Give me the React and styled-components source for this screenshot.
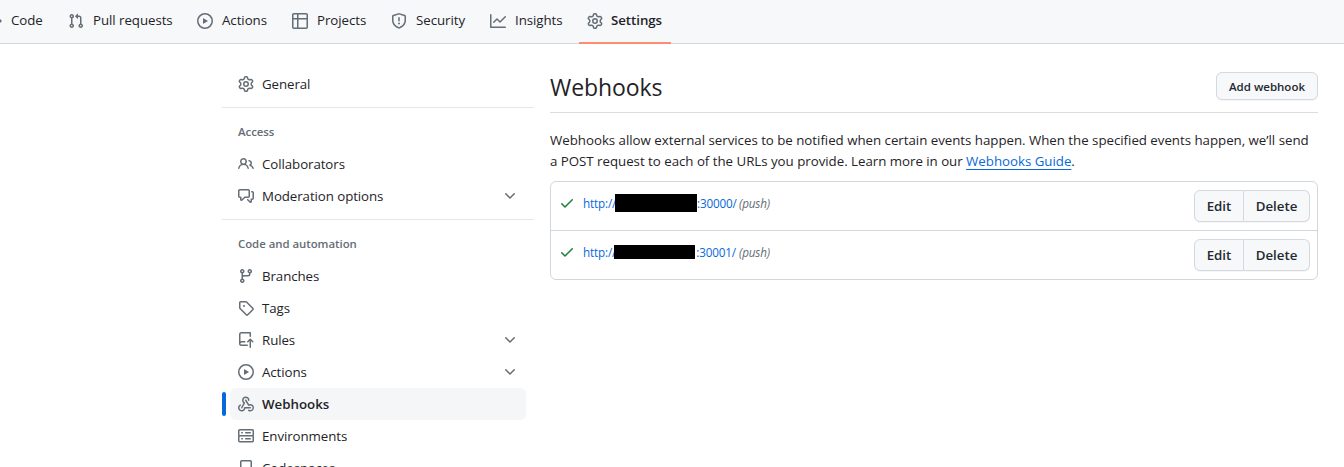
import React from 'react';
import styled, { createGlobalStyle, css } from 'styled-components';

const GlobalStyle = createGlobalStyle`
  * { box-sizing: border-box; }
  body {
    margin: 0;
    background: #fff;
    color: #1f2328;
    font-family: "Open Sans", "Noto Sans", sans-serif;
    font-size: 13.3px;
    line-height: 21px;
  }
`;

const Page = styled.div`
  width: 1344px;
  height: 467px;
  overflow: hidden;
`;

const TabBar = styled.nav`
  display: flex;
  gap: 8px;
  height: 44px;
  background: #f6f8fa;
  border-bottom: 1px solid #d0d7de;
`;

const Tab = styled.a`
  display: flex;
  align-items: center;
  flex: none;
  gap: 9px;
  width: ${(p) => p.$width}px;
  height: 44px;
  padding: 0 8px 3px;
  white-space: nowrap;
  letter-spacing: -0.06px;
  svg { color: #656d76; }
  &:first-child { margin-left: -22px; }
  ${(p) => p.$active && css`
    gap: 8px;
    font-weight: 600;
    padding-bottom: 1px;
    border-bottom: 2px solid #fd8c73;
  `}
`;

const Columns = styled.div`
  display: grid;
  grid-template-columns: 312px 768px;
  column-gap: 16px;
  padding: 24px 0 0 222px;
`;

const Sidebar = styled.aside`
  display: flex;
  flex-direction: column;
`;

const Section = styled.section`
  & + & {
    margin-top: 7px;
    border-top: 1px solid #e4e7eb;
  }
`;

const SectionTitle = styled.h3`
  margin: 0;
  height: 40px;
  padding: 6px 16px 0;
  font-size: 11.4px;
  font-weight: 600;
  line-height: 36px;
  letter-spacing: -0.03px;
  color: #656d76;
`;

const NavRow = styled.a`
  position: relative;
  display: flex;
  align-items: center;
  gap: 8px;
  height: 32px;
  margin: 0 8px;
  padding: 0 8px;
  border-radius: 6px;
  letter-spacing: -0.08px;
  svg { color: #656d76; }
  ${(p) => p.$active && css`
    background: #f4f6f8;
    font-weight: 600;
    letter-spacing: 0;
    &::before {
      content: "";
      position: absolute;
      left: -8px;
      top: 4px;
      width: 4px;
      height: 24px;
      border-radius: 6px;
      background: #0969da;
    }
  `}
`;

const NavLabel = styled.span`
  flex: 1;
  white-space: nowrap;
`;

const Heading = styled.header`
  display: flex;
  justify-content: space-between;
  height: 45px;
  border-bottom: 1px solid #d8dee4;
`;

const Title = styled.h2`
  margin: 0;
  font-size: 23px;
  font-weight: 400;
  line-height: 39px;
  letter-spacing: -0.1px;
`;

const AddButton = styled.button`
  width: 102px;
  height: 28px;
  margin-top: 4px;
  padding: 1px 0 0;
  border: 1px solid #d5d9dd;
  border-radius: 6px;
  background: #f6f8fa;
  color: #24292f;
  font: 600 11.5px/20px "Open Sans", sans-serif;
  box-shadow: 0 1px 0 rgba(31, 35, 40, 0.04);
`;

const Description = styled.p`
  margin: 17px 0 9px;
  white-space: nowrap;
  letter-spacing: -0.025px;
`;

const GuideLink = styled.a`
  color: #0969da;
  text-decoration: underline;
  text-underline-offset: 3px;
`;

const HookList = styled.ul`
  margin: 0;
  padding: 0;
  list-style: none;
  border: 1px solid #d0d7de;
  border-radius: 6px;
`;

const HookRow = styled.li`
  display: flex;
  align-items: flex-start;
  height: 48px;
  padding: 8px 7px 0 8px;
  & + & { height: 49px; border-top: 1px solid #d0d7de; }
  > svg { margin-top: 5px; color: #1a7f37; }
`;

const HookUrl = styled.div`
  display: flex;
  align-items: center;
  flex: 1;
  height: 26px;
  margin-left: 8px;
  font-size: 11.7px;
  letter-spacing: -0.15px;
  color: #0969da;
  white-space: nowrap;
`;

const Scheme = styled.span`
  width: ${(p) => p.$width}px;
`;

const Redaction = styled.span`
  position: relative;
  width: ${(p) => p.$width}px;
  height: ${(p) => p.$height}px;
  margin-bottom: ${(p) => p.$lift}px;
  background: #000;
`;

const Port = styled.span`
  width: ${(p) => p.$width}px;
  direction: rtl;
  unicode-bidi: plaintext;
  text-align: right;
  padding-right: 3px;
`;

const Event = styled.em`
  color: #656d76;
`;

const ButtonGroup = styled.div`
  display: flex;
`;

const GroupButton = styled.button`
  width: ${(p) => p.$width}px;
  height: 32px;
  padding: 0;
  border: 1px solid #d5d9dd;
  background: #f6f8fa;
  color: #24292f;
  font: 600 13.3px/20px "Open Sans", sans-serif;
  box-shadow: 0 1px 0 rgba(31, 35, 40, 0.04);
  &:first-child { border-radius: 6px 0 0 6px; }
  &:last-child { border-left: 0; border-radius: 0 6px 6px 0; }
`;

const Glyph = styled.svg`
  flex: none;
  width: 16px;
  height: 16px;
  fill: currentColor;
`;

const iconPaths = {
  code: 'm11.28 3.22 4.25 4.25a.75.75 0 0 1 0 1.06l-4.25 4.25a.749.749 0 0 1-1.275-.326.749.749 0 0 1 .215-.734L13.94 8l-3.72-3.72a.749.749 0 0 1 .326-1.275.749.749 0 0 1 .734.215Zm-6.56 0a.751.751 0 0 1 1.042.018.751.751 0 0 1 .018 1.042L2.06 8l3.72 3.72a.749.749 0 0 1-.326 1.275.749.749 0 0 1-.734-.215L.47 8.53a.75.75 0 0 1 0-1.06Z',
  pull: 'M1.5 3.25a2.25 2.25 0 1 1 3 2.122v5.256a2.251 2.251 0 1 1-1.5 0V5.372A2.25 2.25 0 0 1 1.5 3.25Zm5.677-.177L9.573.677A.25.25 0 0 1 10 .854V2.5h1A2.5 2.5 0 0 1 13.5 5v5.628a2.251 2.251 0 1 1-1.5 0V5a1 1 0 0 0-1-1h-1v1.646a.25.25 0 0 1-.427.177L7.177 3.427a.25.25 0 0 1 0-.354ZM3.75 2.5a.75.75 0 1 0 0 1.5.75.75 0 0 0 0-1.5Zm0 9.5a.75.75 0 1 0 0 1.5.75.75 0 0 0 0-1.5Zm8.25.75a.75.75 0 1 0 1.5 0 .75.75 0 0 0-1.5 0Z',
  play: 'M8 0a8 8 0 1 1 0 16A8 8 0 0 1 8 0ZM1.5 8a6.5 6.5 0 1 0 13 0 6.5 6.5 0 0 0-13 0Zm4.879-2.773 4.264 2.559a.25.25 0 0 1 0 .428l-4.264 2.559A.25.25 0 0 1 6 10.559V5.442a.25.25 0 0 1 .379-.215Z',
  table: 'M0 1.75C0 .784.784 0 1.75 0h12.5C15.216 0 16 .784 16 1.75v12.5A1.75 1.75 0 0 1 14.25 16H1.75A1.75 1.75 0 0 1 0 14.25ZM6.5 6.5v8h7.75a.25.25 0 0 0 .25-.25V6.5Zm8-1.5V1.75a.25.25 0 0 0-.25-.25H6.5V5Zm-13 1.5v7.75c0 .138.112.25.25.25H5v-8ZM5 5V1.5H1.75a.25.25 0 0 0-.25.25V5Z',
  shield: 'M7.467.133a1.748 1.748 0 0 1 1.066 0l5.25 1.68A1.75 1.75 0 0 1 15 3.48V7c0 1.566-.32 3.182-1.303 4.682-.983 1.498-2.585 2.813-5.032 3.855a1.697 1.697 0 0 1-1.33 0c-2.447-1.042-4.049-2.357-5.032-3.855C1.32 10.182 1 8.566 1 7V3.48a1.75 1.75 0 0 1 1.217-1.667Zm.61 1.429a.25.25 0 0 0-.153 0l-5.25 1.68a.25.25 0 0 0-.174.238V7c0 1.358.275 2.666 1.057 3.86.784 1.194 2.121 2.34 4.366 3.297a.196.196 0 0 0 .154 0c2.245-.956 3.582-2.104 4.366-3.298C13.225 9.666 13.5 8.36 13.5 7V3.48a.251.251 0 0 0-.174-.237l-5.25-1.68ZM8.75 4.75v3a.75.75 0 0 1-1.5 0v-3a.75.75 0 0 1 1.5 0ZM9 10.5a1 1 0 1 1-2 0 1 1 0 0 1 2 0Z',
  graph: 'M1.5 1.75V13.5h13.75a.75.75 0 0 1 0 1.5H.75a.75.75 0 0 1-.75-.75V1.75a.75.75 0 0 1 1.5 0Zm14.28 2.53-5.25 5.25a.75.75 0 0 1-1.06 0L7 7.06 4.28 9.78a.751.751 0 0 1-1.042-.018.751.751 0 0 1-.018-1.042l3.25-3.25a.75.75 0 0 1 1.06 0L10 7.94l4.72-4.72a.751.751 0 0 1 1.042.018.751.751 0 0 1 .018 1.042Z',
  gear: 'M8 0a8.2 8.2 0 0 1 .701.031C9.444.095 9.99.645 10.16 1.29l.288 1.107c.018.066.079.158.212.224.231.114.454.243.668.386.123.082.233.09.299.071l1.103-.303c.644-.176 1.392.021 1.82.63.27.385.506.792.704 1.218.315.675.111 1.422-.364 1.891l-.814.806c-.049.048-.098.147-.088.294.016.257.016.515 0 .772-.01.147.038.246.088.294l.814.806c.475.469.679 1.216.364 1.891a7.977 7.977 0 0 1-.704 1.217c-.428.61-1.176.807-1.82.63l-1.102-.302c-.067-.019-.177-.011-.3.071a5.909 5.909 0 0 1-.668.386c-.133.066-.194.158-.211.224l-.29 1.106c-.168.646-.715 1.196-1.458 1.26a8.006 8.006 0 0 1-1.402 0c-.743-.064-1.289-.614-1.458-1.26l-.289-1.106c-.018-.066-.079-.158-.212-.224a5.738 5.738 0 0 1-.668-.386c-.123-.082-.233-.09-.299-.071l-1.103.303c-.644.176-1.392-.021-1.82-.63a8.12 8.12 0 0 1-.704-1.218c-.315-.675-.111-1.422.363-1.891l.815-.806c.05-.048.098-.147.088-.294a6.214 6.214 0 0 1 0-.772c.01-.147-.038-.246-.088-.294l-.815-.806C.635 6.045.431 5.298.746 4.623a7.92 7.92 0 0 1 .704-1.217c.428-.61 1.176-.807 1.82-.63l1.102.302c.067.019.177.011.3-.071.214-.143.437-.272.668-.386.133-.066.194-.158.211-.224l.29-1.106C6.009.645 6.556.095 7.299.03 7.53.01 7.764 0 8 0Zm-.571 1.525c-.036.003-.108.036-.137.146l-.289 1.105c-.147.561-.549.967-.998 1.189-.173.086-.34.183-.5.29-.417.278-.97.423-1.529.27l-1.103-.303c-.109-.03-.175.016-.195.045-.22.312-.412.644-.573.99-.014.031-.021.11.059.19l.815.806c.411.406.562.957.53 1.456a4.709 4.709 0 0 0 0 .582c.032.499-.119 1.05-.53 1.456l-.815.806c-.081.08-.073.159-.059.19.162.346.353.677.573.989.02.03.085.076.195.046l1.102-.303c.56-.153 1.113-.008 1.53.27.161.107.328.204.501.29.447.222.85.629.997 1.189l.289 1.105c.029.109.101.143.137.146a6.6 6.6 0 0 0 1.142 0c.036-.003.108-.036.137-.146l.289-1.105c.147-.561.549-.967.998-1.189.173-.086.34-.183.5-.29.417-.278.97-.423 1.529-.27l1.103.303c.109.029.175-.016.195-.045.22-.313.411-.644.573-.99.014-.031.021-.11-.059-.19l-.815-.806c-.411-.406-.562-.957-.53-1.456a4.709 4.709 0 0 0 0-.582c-.032-.499.119-1.05.53-1.456l.815-.806c.081-.08.073-.159.059-.19a6.464 6.464 0 0 0-.573-.989c-.02-.03-.085-.076-.195-.046l-1.102.303c-.56.153-1.113.008-1.53-.27a4.44 4.44 0 0 0-.501-.29c-.447-.222-.85-.629-.997-1.189l-.289-1.105c-.029-.11-.101-.143-.137-.146a6.6 6.6 0 0 0-1.142 0ZM11 8a3 3 0 1 1-6 0 3 3 0 0 1 6 0ZM9.5 8a1.5 1.5 0 1 0-3.001.001A1.5 1.5 0 0 0 9.5 8Z',
  people: 'M2 5.5a3.5 3.5 0 1 1 5.898 2.549 5.508 5.508 0 0 1 3.034 4.084.75.75 0 1 1-1.482.235 4 4 0 0 0-7.9 0 .75.75 0 0 1-1.482-.236A5.507 5.507 0 0 1 3.102 8.05 3.493 3.493 0 0 1 2 5.5ZM11 4a3.001 3.001 0 0 1 2.22 5.018 5.01 5.01 0 0 1 2.56 3.012.749.749 0 0 1-.885.954.752.752 0 0 1-.549-.514 3.507 3.507 0 0 0-2.522-2.372.75.75 0 0 1-.574-.73v-.352a.75.75 0 0 1 .416-.672A1.5 1.5 0 0 0 11 5.5.75.75 0 0 1 11 4Zm-5.5-.5a2 2 0 1 0-.001 3.999A2 2 0 0 0 5.5 3.5Z',
  discussion: 'M1.75 1h8.5c.966 0 1.75.784 1.75 1.75v5.5A1.75 1.75 0 0 1 10.25 10H7.061l-2.574 2.573A1.458 1.458 0 0 1 2 11.543V10h-.25A1.75 1.75 0 0 1 0 8.25v-5.5C0 1.784.784 1 1.75 1ZM1.5 2.75v5.5c0 .138.112.25.25.25h1a.75.75 0 0 1 .75.75v2.19l2.72-2.72a.749.749 0 0 1 .53-.22h3.5a.25.25 0 0 0 .25-.25v-5.5a.25.25 0 0 0-.25-.25h-8.5a.25.25 0 0 0-.25.25Zm13 2a.25.25 0 0 0-.25-.25h-.5a.75.75 0 0 1 0-1.5h.5c.966 0 1.75.784 1.75 1.75v5.5A1.75 1.75 0 0 1 14.25 12H14v1.543a1.458 1.458 0 0 1-2.487 1.03L9.22 12.28a.749.749 0 0 1 .326-1.275.749.749 0 0 1 .734.215l2.22 2.22v-2.19a.75.75 0 0 1 .75-.75h1a.25.25 0 0 0 .25-.25Z',
  branch: 'M9.5 3.25a2.25 2.25 0 1 1 3 2.122V6A2.5 2.5 0 0 1 10 8.5H6a1 1 0 0 0-1 1v1.128a2.251 2.251 0 1 1-1.5 0V5.372a2.25 2.25 0 1 1 1.5 0v1.836A2.493 2.493 0 0 1 6 7h4a1 1 0 0 0 1-1v-.628A2.25 2.25 0 0 1 9.5 3.25Zm-6 0a.75.75 0 1 0 1.5 0 .75.75 0 0 0-1.5 0Zm8.25-.75a.75.75 0 1 0 0 1.5.75.75 0 0 0 0-1.5ZM4.25 12a.75.75 0 1 0 0 1.5.75.75 0 0 0 0-1.5Z',
  tag: 'M1 7.775V2.75C1 1.784 1.784 1 2.75 1h5.025c.464 0 .91.184 1.238.513l6.25 6.25a1.75 1.75 0 0 1 0 2.474l-5.026 5.026a1.75 1.75 0 0 1-2.474 0l-6.25-6.25A1.752 1.752 0 0 1 1 7.775Zm1.5 0c0 .066.026.13.073.177l6.25 6.25a.25.25 0 0 0 .354 0l5.025-5.025a.25.25 0 0 0 0-.354l-6.25-6.25a.25.25 0 0 0-.177-.073H2.75a.25.25 0 0 0-.25.25ZM6 5a1 1 0 1 1 0 2 1 1 0 0 1 0-2Z',
  rules: 'M1 2.5A2.5 2.5 0 0 1 3.5 0h8.75a.75.75 0 0 1 .75.75v3.5a.75.75 0 0 1-1.5 0V1.5h-8a1 1 0 0 0-1 1v6.708A2.493 2.493 0 0 1 3.5 9h3.25a.75.75 0 0 1 0 1.5H3.5a1 1 0 0 0 0 2h5.75a.75.75 0 0 1 0 1.5H3.5A2.5 2.5 0 0 1 1 11.5Zm13.23 7.79-1.224-1.224v6.184a.75.75 0 0 1-1.5 0V9.066L10.28 10.29a.75.75 0 0 1-1.06-1.061l2.505-2.504a.75.75 0 0 1 1.06 0L15.29 9.23a.751.751 0 0 1-.018 1.042.751.751 0 0 1-1.042.018Z',
  webhook: 'M5.5 4.25a2.25 2.25 0 0 1 4.5 0 .75.75 0 0 0 1.5 0 3.75 3.75 0 1 0-6.14 2.889l-2.272 4.258a.75.75 0 0 0 1.324.706L7 7.25a.75.75 0 0 0-.309-1.015A2.25 2.25 0 0 1 5.5 4.25ZM7.364 3.607a.75.75 0 0 1 1.03.257l2.608 4.349a3.75 3.75 0 1 1-.628 6.785.75.75 0 0 1 .752-1.299 2.25 2.25 0 1 0-.033-3.88.75.75 0 0 1-1.03-.256L7.107 4.636a.75.75 0 0 1 .257-1.03ZM2.9 8.776A.75.75 0 0 1 2.625 9.8 2.25 2.25 0 1 0 6 11.75a.75.75 0 0 1 .75-.751h5.5a.75.75 0 0 1 0 1.5H7.425a3.751 3.751 0 1 1-5.55-3.998.75.75 0 0 1 1.024.274Z',
  server: 'M1.75 1h12.5c.966 0 1.75.784 1.75 1.75v4c0 .372-.116.717-.314 1 .198.283.314.628.314 1v4a1.75 1.75 0 0 1-1.75 1.75H1.75A1.75 1.75 0 0 1 0 12.75v-4c0-.358.109-.707.314-1a1.739 1.739 0 0 1-.314-1v-4C0 1.784.784 1 1.75 1ZM1.5 2.75v4c0 .138.112.25.25.25h12.5a.25.25 0 0 0 .25-.25v-4a.25.25 0 0 0-.25-.25H1.75a.25.25 0 0 0-.25.25Zm.25 5.75a.25.25 0 0 0-.25.25v4c0 .138.112.25.25.25h12.5a.25.25 0 0 0 .25-.25v-4a.25.25 0 0 0-.25-.25ZM7 4.75A.75.75 0 0 1 7.75 4h4.5a.75.75 0 0 1 0 1.5h-4.5A.75.75 0 0 1 7 4.75ZM7.75 10h4.5a.75.75 0 0 1 0 1.5h-4.5a.75.75 0 0 1 0-1.5ZM3 4.75A.75.75 0 0 1 3.75 4h.5a.75.75 0 0 1 0 1.5h-.5A.75.75 0 0 1 3 4.75ZM3.75 10h.5a.75.75 0 0 1 0 1.5h-.5a.75.75 0 0 1 0-1.5Z',
  codespaces: 'M0 11.25c0-.966.784-1.75 1.75-1.75h12.5c.966 0 1.75.784 1.75 1.75v3A1.75 1.75 0 0 1 14.25 16H1.75A1.75 1.75 0 0 1 0 14.25Zm2-9.5C2 .784 2.784 0 3.75 0h8.5C13.216 0 14 .784 14 1.75v5a1.75 1.75 0 0 1-1.75 1.75h-8.5A1.75 1.75 0 0 1 2 6.75Zm1.75-.25a.25.25 0 0 0-.25.25v5c0 .138.112.25.25.25h8.5a.25.25 0 0 0 .25-.25v-5a.25.25 0 0 0-.25-.25Zm-2 9.5a.25.25 0 0 0-.25.25v3c0 .138.112.25.25.25h12.5a.25.25 0 0 0 .25-.25v-3a.25.25 0 0 0-.25-.25Z',
  chevron: 'M12.78 5.22a.749.749 0 0 1 0 1.06l-4.25 4.25a.749.749 0 0 1-1.06 0L3.22 6.28a.749.749 0 1 1 1.06-1.06L8 8.939l3.72-3.719a.749.749 0 0 1 1.06 0Z',
  check: 'M13.78 4.22a.75.75 0 0 1 0 1.06l-7.25 7.25a.75.75 0 0 1-1.06 0L2.22 9.28a.751.751 0 0 1 .018-1.042.751.751 0 0 1 1.042-.018L6 10.94l6.72-6.72a.75.75 0 0 1 1.06 0Z',
};

const Icon = ({ name }) => (
  <Glyph viewBox="0 0 16 16" aria-hidden="true">
    <path d={iconPaths[name]} />
  </Glyph>
);

const tabs = [
  { label: 'Code', icon: 'code', width: 74 },
  { label: 'Pull requests', icon: 'pull', width: 121 },
  { label: 'Actions', icon: 'play', width: 87 },
  { label: 'Projects', icon: 'table', width: 91 },
  { label: 'Security', icon: 'shield', width: 91 },
  { label: 'Insights', icon: 'graph', width: 89 },
  { label: 'Settings', icon: 'gear', width: 92, active: true },
];

const sections = [
  { rows: [{ label: 'General', icon: 'gear' }] },
  {
    title: 'Access',
    rows: [
      { label: 'Collaborators', icon: 'people' },
      { label: 'Moderation options', icon: 'discussion', expandable: true },
    ],
  },
  {
    title: 'Code and automation',
    rows: [
      { label: 'Branches', icon: 'branch' },
      { label: 'Tags', icon: 'tag' },
      { label: 'Rules', icon: 'rules', expandable: true },
      { label: 'Actions', icon: 'play', expandable: true },
      { label: 'Webhooks', icon: 'webhook', active: true },
      { label: 'Environments', icon: 'server' },
      { label: 'Codespaces', icon: 'codespaces' },
    ],
  },
];

const hooks = [
  { port: ':30000/', scheme: 32, bar: 82, barHeight: 18, lift: 1, portWidth: 42 },
  { port: ':30001/', scheme: 31, bar: 81, barHeight: 14, lift: 0, portWidth: 44 },
];

export default function App() {
  return (
    <Page>
      <GlobalStyle />
      <TabBar>
        {tabs.map(({ label, icon, width, active }) => (
          <Tab key={label} $width={width} $active={active}>
            <Icon name={icon} />
            {label}
          </Tab>
        ))}
      </TabBar>
      <Columns>
        <Sidebar>
          {sections.map(({ title, rows }, i) => (
            <Section key={i}>
              {title && <SectionTitle>{title}</SectionTitle>}
              {rows.map(({ label, icon, active, expandable }) => (
                <NavRow key={label} $active={active}>
                  <Icon name={icon} />
                  <NavLabel>{label}</NavLabel>
                  {expandable && <Icon name="chevron" />}
                </NavRow>
              ))}
            </Section>
          ))}
        </Sidebar>
        <main>
          <Heading>
            <Title>Webhooks</Title>
            <AddButton>Add webhook</AddButton>
          </Heading>
          <Description>
            Webhooks allow external services to be notified when certain events happen. When the specified events happen, we’ll send
            <br />
            a POST request to each of the URLs you provide. Learn more in our <GuideLink>Webhooks Guide</GuideLink>.
          </Description>
          <HookList>
            {hooks.map((h) => (
              <HookRow key={h.port}>
                <Icon name="check" />
                <HookUrl>
                  <Scheme $width={h.scheme}>http://</Scheme>
                  <Redaction $width={h.bar} $height={h.barHeight} $lift={h.lift} />
                  <Port $width={h.portWidth}>{h.port}</Port>
                  <Event>(push)</Event>
                </HookUrl>
                <ButtonGroup>
                  <GroupButton $width={50}>Edit</GroupButton>
                  <GroupButton $width={66}>Delete</GroupButton>
                </ButtonGroup>
              </HookRow>
            ))}
          </HookList>
        </main>
      </Columns>
    </Page>
  );
}
